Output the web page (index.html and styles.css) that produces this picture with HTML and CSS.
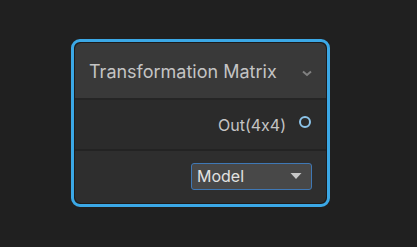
FILE: index.html
```html
<!DOCTYPE html>
<html lang="en">

<head>
    <meta charset="UTF-8">
    <meta name="viewport" content="width=device-width, initial-scale=1.0">
    <title>Transformation Matrix</title>

    <link rel="stylesheet" href="styles.css">
</head>

<body>

    <div class="node">
        <div class="node-title">
            <span class="title-text">Transformation Matrix</span>
            <svg class="collapse" width="12" height="8" viewBox="0 0 12 8">
                <path d="M2 2.5 L6 6 L10 2.5" fill="none" stroke="#808080" stroke-width="2"/>
            </svg>
        </div>

        <div class="node-outputs">
            <span class="port-label">Out(4x4)</span>
            <span class="port"></span>
        </div>

        <div class="node-controls">
            <div class="dropdown">
                <span>Model</span>
                <svg width="12" height="8" viewBox="0 0 12 8">
                    <path d="M0.5 1 L11.5 1 L6 7 Z" fill="#c8c8c8"/>
                </svg>
            </div>
        </div>
    </div>

</body>

</html>
```

FILE: styles.css
```css
body {
    font-family: Inter, "Noto Sans", sans-serif;
    font-feature-settings: "calt" 0;
    margin: 0;
    background-color: #202020;
    width: 417px;
    height: 247px;
    overflow: hidden;
}

.node {
    margin: 39px 0 0 71px;
    width: 251px;
    border: 3px solid #3ba8e6;
    border-radius: 9px;
    padding: 1px;
    background-color: #1c1c1c;
    overflow: hidden;
}

.node-title {
    display: flex;
    align-items: center;
    justify-content: space-between;
    height: 57px;
    padding: 0 13px 0 14px;
    background-color: #393939;
    border-radius: 6px 6px 0 0;
    border-bottom: 2px solid #252525;
    box-sizing: border-box;
}

.title-text {
    color: #c4c4c4;
    font-size: 18px;
    padding-top: 2px;
}

.collapse {
    margin-top: 4px;
}

.node-outputs {
    display: flex;
    align-items: center;
    justify-content: flex-end;
    height: 51px;
    padding-right: 15px;
    background-color: #2b2b2b;
    border-bottom: 2px solid #232323;
    box-sizing: border-box;
}

.port-label {
    color: #c4c4c4;
    font-size: 16px;
    margin-right: 13px;
}

.port {
    width: 8px;
    height: 8px;
    border: 2px solid #8cc4ea;
    border-radius: 50%;
    margin-top: -6px;
}

.node-controls {
    display: flex;
    align-items: center;
    justify-content: flex-end;
    height: 52px;
    padding-right: 14px;
    padding-bottom: 2px;
    background-color: #2e2e2e;
    border-radius: 0 0 6px 6px;
    box-sizing: border-box;
}

.dropdown {
    display: flex;
    align-items: center;
    justify-content: space-between;
    width: 121px;
    height: 27px;
    padding: 0 9px 0 5px;
    background-color: #484848;
    border: 1px solid #3f78b5;
    border-radius: 3px;
    box-sizing: border-box;
    color: #e2e2e2;
    font-size: 16px;
}
```
